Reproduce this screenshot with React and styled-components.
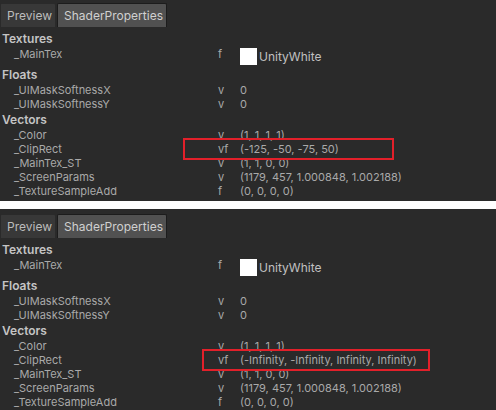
import React from 'react';
import styled, { createGlobalStyle } from 'styled-components';

const GlobalStyle = createGlobalStyle`
    body {
        margin: 0;
        background: #ffffff;
        font-family: Inter, "Noto Sans", "Liberation Sans", sans-serif;
    }
`;

const Page = styled.div`
    width: 496px;
    height: 410px;
    display: flex;
    flex-direction: column;
    gap: 8px;
`;

const Panel = styled.div`
    position: relative;
    height: 201px;
    box-sizing: border-box;
    padding-top: ${props => props.top}px;
    background: #2a2a2a;
    overflow: hidden;
`;

const TabBar = styled.div`
    display: flex;
    height: 24px;
    margin-bottom: 3px;
`;

const Tab = styled.div`
    display: flex;
    align-items: center;
    box-sizing: border-box;
    height: 24px;
    padding: 0 ${props => (props.active ? 6 : 6)}px;
    width: ${props => props.width}px;
    margin-right: 1px;
    font-size: 12px;
    color: ${props => (props.active ? '#d0d0d0' : '#bcbcbc')};
    background: ${props => (props.active ? '#515151' : '#383838')};
    border: 1px solid ${props => (props.active ? '#1c1c1c' : '#2a2a2a')};
    border-bottom: none;
    border-radius: 2px 2px 0 0;
`;

const Header = styled.div`
    height: 17px;
    line-height: 17px;
    padding-left: 2px;
    font-size: 12px;
    font-weight: 600;
    color: #c4c4c4;
`;

const Row = styled.div`
    display: grid;
    grid-template-columns: 204px 22px 1fr;
    height: ${props => props.height || 14}px;
    padding-left: 14px;
    font-size: 11px;
    line-height: 14px;
    color: #a9a9a9;
    white-space: nowrap;
`;

const Value = styled.div`
    display: flex;
    align-items: flex-start;
    gap: 2px;
`;

const Swatch = styled.div`
    width: 17px;
    height: 17px;
    margin-top: 1px;
    background: #ffffff;
`;

const TexName = styled.span`
    font-size: 12px;
    line-height: 20px;
    color: #c0c0c0;
`;

const Highlight = styled.div`
    position: absolute;
    left: ${props => props.left}px;
    top: ${props => props.y}px;
    width: ${props => props.width}px;
    height: 22px;
    box-sizing: border-box;
    border: 2px solid #e2202a;
`;

const Prop = ({ name, type, value }) => (
    <Row>
        <span>{name}</span>
        <span>{type}</span>
        <span>{value}</span>
    </Row>
);

const Inspector = ({ top, clipRect, box }) => (
    <Panel top={top}>
        <TabBar>
            <Tab width={56}>Preview</Tab>
            <Tab active width={110}>ShaderProperties</Tab>
        </TabBar>
        <Header>Textures</Header>
        <Row height={19}>
            <span>_MainTex</span>
            <span>f</span>
            <Value>
                <Swatch />
                <TexName>UnityWhite</TexName>
            </Value>
        </Row>
        <Header>Floats</Header>
        <Prop name="_UIMaskSoftnessX" type="v" value="0" />
        <Prop name="_UIMaskSoftnessY" type="v" value="0" />
        <Header>Vectors</Header>
        <Prop name="_Color" type="v" value="(1, 1, 1, 1)" />
        <Prop name="_ClipRect" type="vf" value={clipRect} />
        <Prop name="_MainTex_ST" type="v" value="(1, 1, 0, 0)" />
        <Prop name="_ScreenParams" type="v" value="(1179, 457, 1.000848, 1.002188)" />
        <Prop name="_TextureSampleAdd" type="f" value="(0, 0, 0, 0)" />
        <Highlight left={box.left} y={box.y} width={box.width} />
    </Panel>
);

const App = () => (
    <Page>
        <GlobalStyle />
        <Inspector
            top={3}
            clipRect="(-125, -50, -75, 50)"
            box={{ left: 183, y: 138, width: 211 }}
        />
        <Inspector
            top={5}
            clipRect="(-Infinity, -Infinity, Infinity, Infinity)"
            box={{ left: 202, y: 140, width: 228 }}
        />
    </Page>
);

export default App;
